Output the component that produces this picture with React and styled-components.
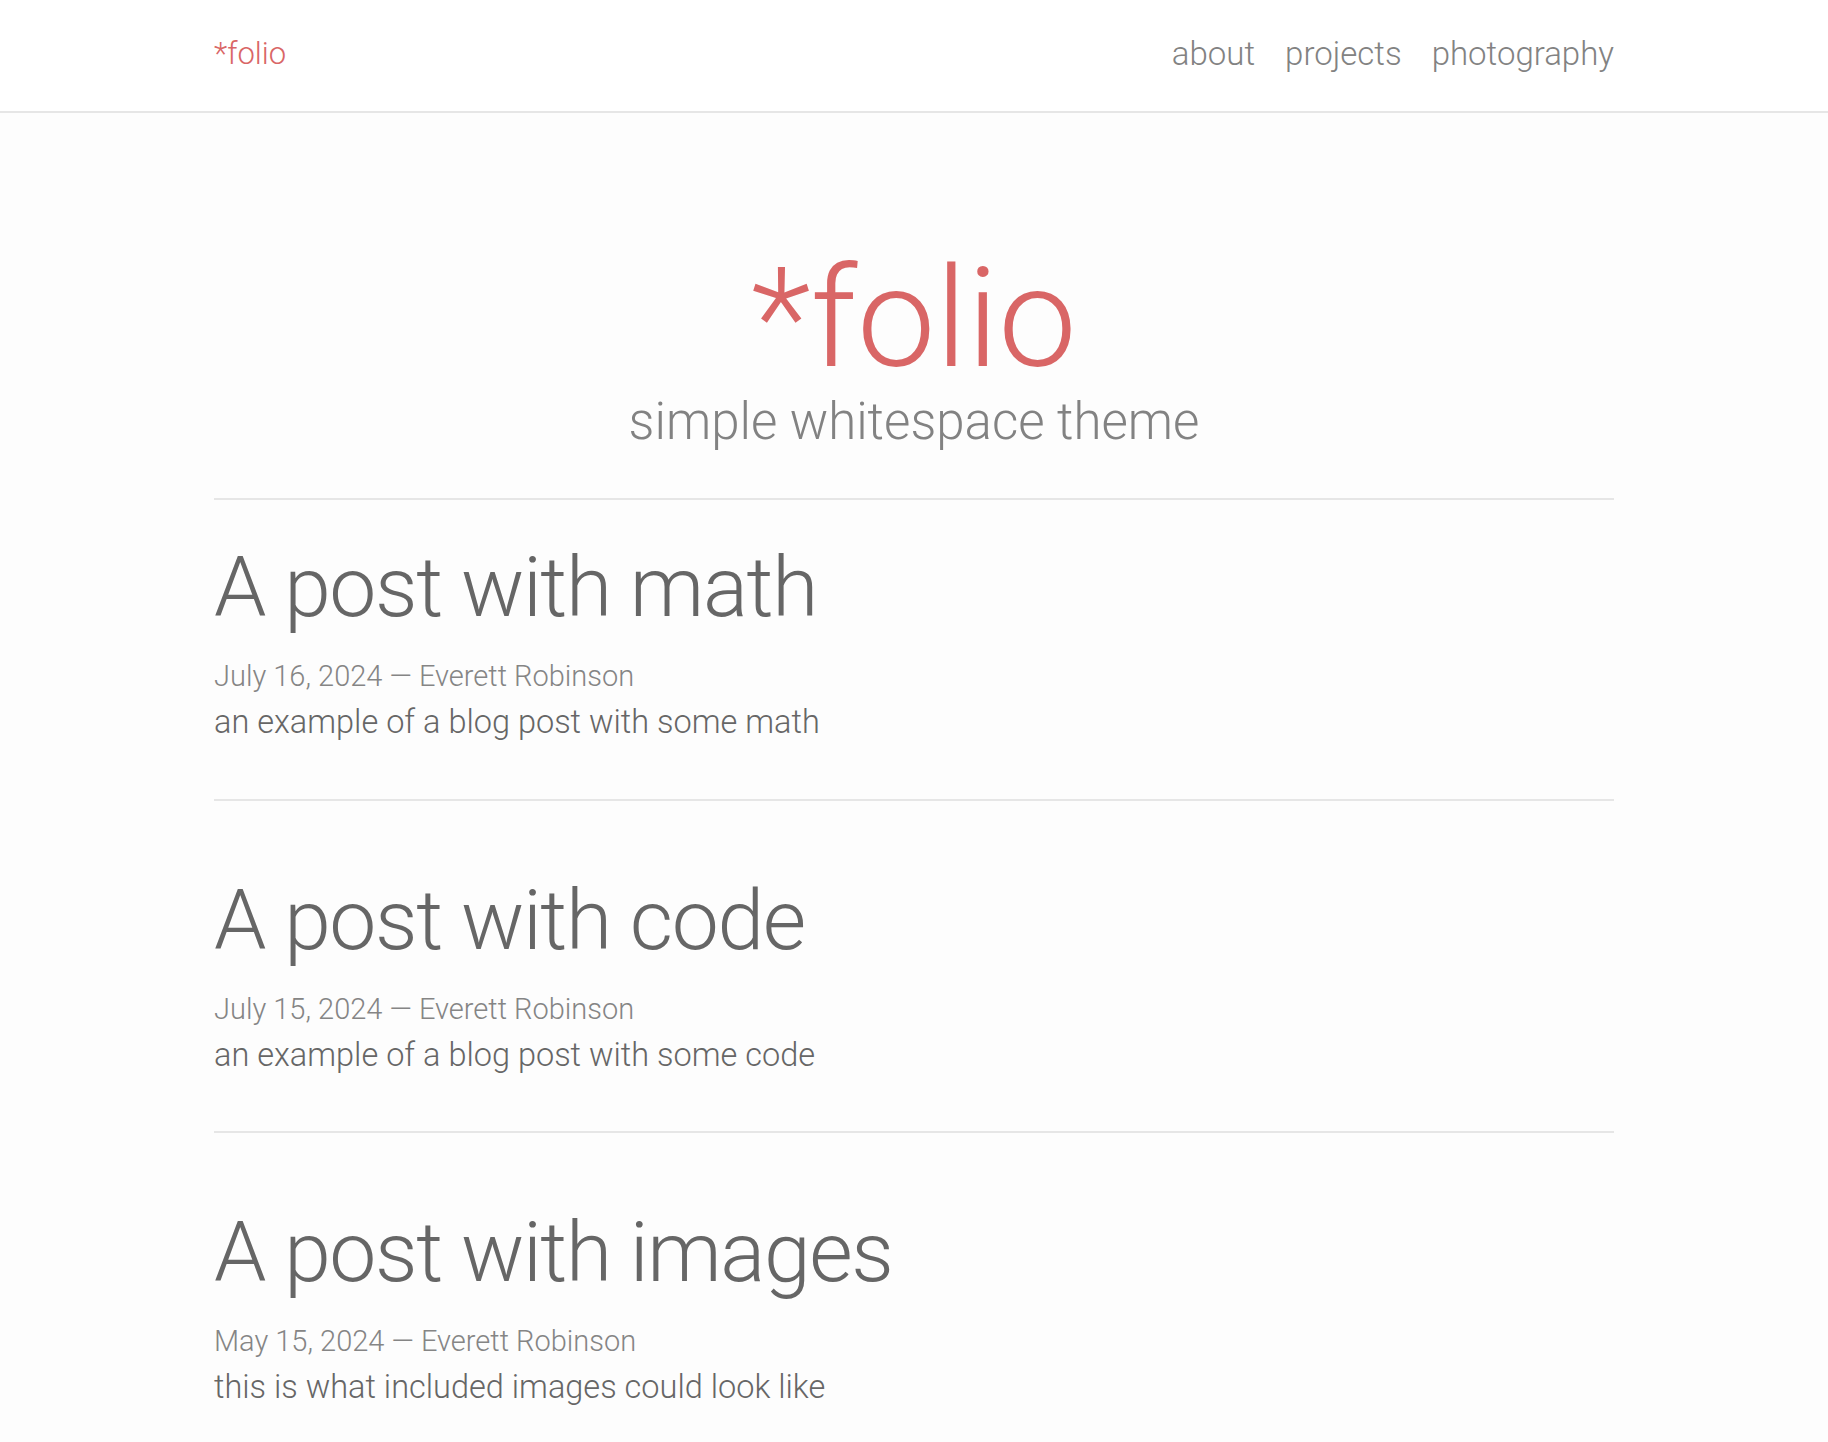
import React from "react";
import styled, { createGlobalStyle } from "styled-components";

const GlobalStyle = createGlobalStyle`
  html, body {
    margin: 0;
    padding: 0;
    background: #fdfdfd;
    font-family: Roboto, "Liberation Sans", Arial, sans-serif;
    font-weight: 300;
  }
  * { box-sizing: border-box; }
`;

const Header = styled.header`
  background: #ffffff;
  border-bottom: 2px solid #e6e6e6;
  height: 113px;
`;

const Bar = styled.div`
  width: 1400px;
  height: 111px;
  margin: 0 auto;
  padding-bottom: 4px;
  display: flex;
  align-items: center;
  justify-content: space-between;
`;

const Brand = styled.a`
  color: #d96666;
  font-size: 31px;
  line-height: 1;
  text-decoration: none;
`;

const Nav = styled.nav`
  display: flex;
  gap: 30px;
`;

const NavLink = styled.a`
  color: #828282;
  font-size: 33px;
  line-height: 1;
  text-decoration: none;
`;

const Main = styled.main`
  width: 1400px;
  margin: 0 auto;
`;

const Hero = styled.section`
  text-align: center;
  padding: 135px 0 51px;
  border-bottom: 2px solid #e6e6e6;
`;

const HeroTitle = styled.h1`
  margin: 0;
  font-size: 140px;
  font-weight: 300;
  line-height: 1;
  color: #d96666;
`;

const HeroSub = styled.p`
  margin: 8px 0 0;
  font-size: 51px;
  line-height: 1;
  color: #828282;
`;

const PostList = styled.ul`
  list-style: none;
  margin: 0;
  padding: 0;
`;

const Post = styled.li`
  padding: ${(p) => (p.$first ? "46px" : "78px")} 0 60px;
  border-bottom: ${(p) => (p.$last ? "none" : "2px solid #e6e6e6")};
`;

const PostTitle = styled.h2`
  margin: 0;
  font-size: 84px;
  font-weight: 300;
  letter-spacing: -1.4px;
  line-height: 1;
  color: #666666;
`;

const Meta = styled.p`
  margin: 32px 0 0;
  font-size: 29px;
  line-height: 1;
  color: #858585;
`;

const Description = styled.p`
  margin: 15px 0 0;
  font-size: 32.5px;
  line-height: 1;
  color: #666666;
`;

const posts = [
  {
    title: "A post with math",
    date: "July 16, 2024",
    description: "an example of a blog post with some math",
  },
  {
    title: "A post with code",
    date: "July 15, 2024",
    description: "an example of a blog post with some code",
  },
  {
    title: "A post with images",
    date: "May 15, 2024",
    description: "this is what included images could look like",
  },
];

export default function App() {
  return (
    <>
      <GlobalStyle />
      <Header>
        <Bar>
          <Brand href="#">*folio</Brand>
          <Nav>
            <NavLink href="#">about</NavLink>
            <NavLink href="#">projects</NavLink>
            <NavLink href="#">photography</NavLink>
          </Nav>
        </Bar>
      </Header>
      <Main>
        <Hero>
          <HeroTitle>*folio</HeroTitle>
          <HeroSub>simple whitespace theme</HeroSub>
        </Hero>
        <PostList>
          {posts.map((post, i) => (
            <Post key={post.title} $first={i === 0} $last={i === posts.length - 1}>
              <PostTitle>{post.title}</PostTitle>
              <Meta>
                {post.date} — Everett Robinson
              </Meta>
              <Description>{post.description}</Description>
            </Post>
          ))}
        </PostList>
      </Main>
    </>
  );
}
